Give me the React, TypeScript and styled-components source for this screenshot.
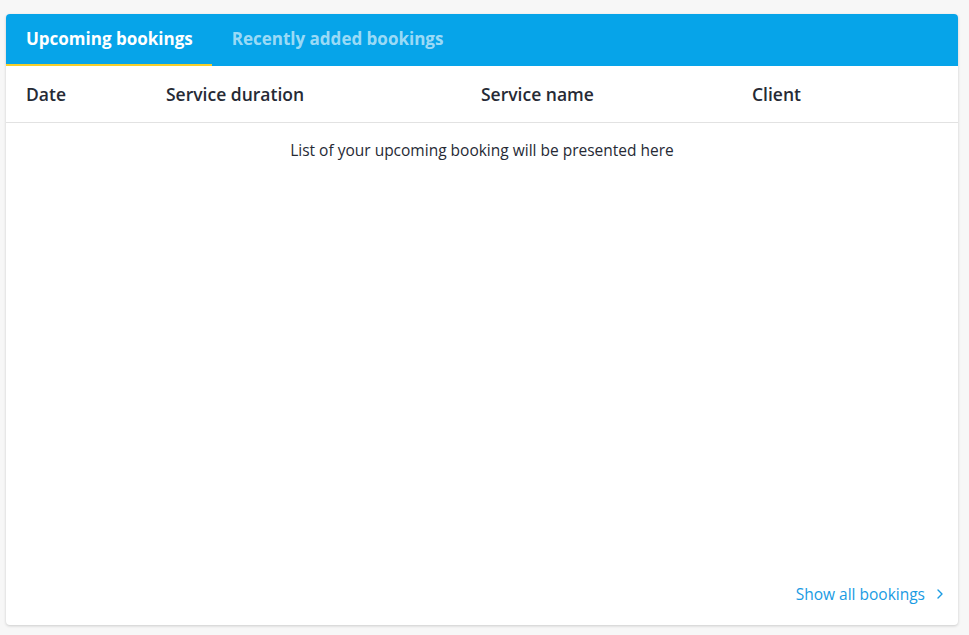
import * as React from 'react'
import { useState } from 'react'
import styled, { createGlobalStyle } from 'styled-components'

const GlobalStyle = createGlobalStyle`
  html, body {
    margin: 0;
    padding: 0;
    background: #f7f7f7;
    font-family: "Open Sans", "Liberation Sans", sans-serif;
  }
`

const Page = styled.div`
  padding: 14px 11px 10px 6px;
`

const Card = styled.section`
  background: #fff;
  border-radius: 4px;
  box-shadow: 0 1px 3px rgba(0, 0, 0, 0.18);
  height: 611px;
  display: flex;
  flex-direction: column;
  overflow: hidden;
`

const TabBar = styled.nav`
  display: flex;
  height: 52px;
  background: #06a4e9;
`

const Tab = styled.button<{ $active?: boolean }>`
  border: 0;
  background: none;
  padding: 0 19px 4px 20px;
  margin: 0;
  font-family: inherit;
  font-size: 17px;
  font-weight: 700;
  cursor: pointer;
  color: ${p => (p.$active ? '#fff' : 'rgba(255, 255, 255, 0.62)')};
  box-shadow: ${p => (p.$active ? 'inset 0 -2px 0 #f5cf2b' : 'none')};
`

const HeadRow = styled.div`
  display: grid;
  grid-template-columns: 140px 315px 271px 1fr;
  align-items: center;
  height: 57px;
  padding: 0 20px;
  box-sizing: border-box;
  border-bottom: 1px solid #e2e2e2;
`

const HeadCell = styled.div`
  font-size: 17.5px;
  font-weight: 600;
  color: #262a35;
`

const Empty = styled.p`
  margin: 0;
  padding-top: 16px;
  text-align: center;
  font-size: 15.5px;
  color: #262a35;
  flex: 1;
`

const Footer = styled.div`
  display: flex;
  justify-content: flex-end;
  padding: 0 14px 20px 0;
`

const MoreLink = styled.a`
  display: flex;
  align-items: center;
  gap: 11px;
  font-size: 15.5px;
  color: #1a9be3;
  text-decoration: none;
  cursor: pointer;
`

const Chevron = () => (
  <svg width="8" height="12" viewBox="0 0 8 12" fill="none">
    <path d="M2 2l4 4-4 4" stroke="#1a9be3" strokeWidth="1.4" strokeLinecap="round" strokeLinejoin="round" />
  </svg>
)

const tabs = ['Upcoming bookings', 'Recently added bookings']
const columns = ['Date', 'Service duration', 'Service name', 'Client']

export default function App() {
  const [active, setActive] = useState(0)

  return (
    <>
      <GlobalStyle />
      <Page>
        <Card>
          <TabBar>
            {tabs.map((t, i) => (
              <Tab key={t} $active={active === i} onClick={() => setActive(i)}>
                {t}
              </Tab>
            ))}
          </TabBar>
          <HeadRow>
            {columns.map(c => (
              <HeadCell key={c}>{c}</HeadCell>
            ))}
          </HeadRow>
          <Empty>
            {active === 0
              ? 'List of your upcoming booking will be presented here'
              : 'List of your recently added bookings will be presented here'}
          </Empty>
          <Footer>
            <MoreLink>
              Show all bookings
              <Chevron />
            </MoreLink>
          </Footer>
        </Card>
      </Page>
    </>
  )
}
